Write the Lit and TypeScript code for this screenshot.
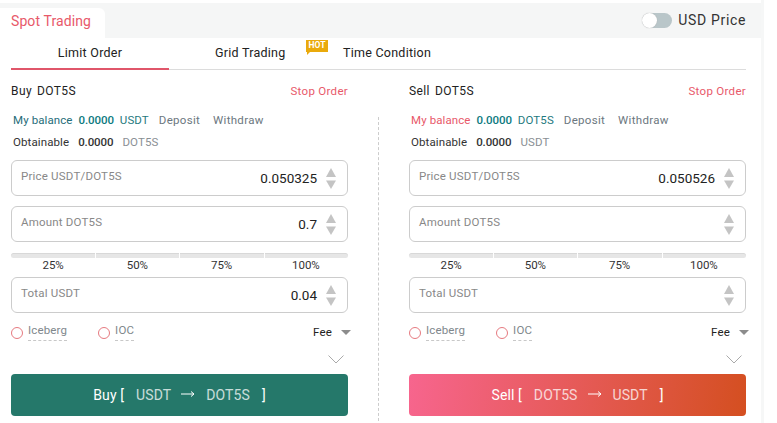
import { LitElement, html, css, svg } from "lit";
import { customElement } from "lit/decorators.js";

interface Side {
  title: string; labelRed: boolean; balUnit: string; obUnit: string;
  price: string; amount: string; total: string; action: string; from: string; to: string; btn: string;
}

const sides: Side[] = [
  { title: "Buy", labelRed: false, balUnit: "USDT", obUnit: "DOT5S", price: "0.050325", amount: "0.7", total: "0.04", action: "Buy", from: "USDT", to: "DOT5S", btn: "buy" },
  { title: "Sell", labelRed: true, balUnit: "DOT5S", obUnit: "USDT", price: "0.050526", amount: "", total: "", action: "Sell", from: "DOT5S", to: "USDT", btn: "sell" },
];

@customElement("app-root")
export class AppRoot extends LitElement {
  static styles = css`
    :host { display: block; width: 777px; height: 423px; overflow: hidden; background: #fff; font-family: Roboto, "Liberation Sans", sans-serif; color: #222; }
    .page { width: 761px; height: 423px; background: #fff; border-right: 3px solid #f6f7f7; padding-top: 3px; box-sizing: content-box; }
    .topbar { height: 35px; background: #f5f6f6; display: flex; justify-content: space-between; align-items: flex-end; }
    .tab { width: 105px; height: 30px; box-sizing: border-box; background: #fff; border-top-right-radius: 6px; color: #e8596a; font-size: 14px; padding: 5px 0 0 11px; letter-spacing: 0.1px; }
    .usd { display: flex; align-items: center; gap: 6px; font-size: 14px; color: #333; height: 35px; margin-right: 15px; letter-spacing: 0.65px; }
    .usd span.txt { margin-bottom: 2px; }
    .toggle { width: 30px; height: 15px; border-radius: 8px; background: #b9c6c9; position: relative; }
    .toggle i { position: absolute; left: 0; top: 0; width: 15px; height: 15px; border-radius: 50%; background: #fff; box-shadow: 0 0 1px #aaa; }
    .tabs { display: flex; margin: 0 15px 0 11px; height: 31px; border-bottom: 1px solid #dcdcdc; font-size: 12.5px; color: #222; letter-spacing: 0.25px; }
    .t { height: 31px; box-sizing: border-box; padding-top: 7px; position: relative; }
    .t.a { width: 158px; text-align: center; border-bottom: 2px solid #e0566a; height: 32px; }
    .t.b { margin-left: 46px; width: 128px; }
    .hot { position: absolute; left: 91px; top: 2px; width: 22px; height: 12px; background: #eaaa0c; color: #fff; font-size: 8.5px; font-weight: 700; line-height: 11px; text-align: center; letter-spacing: 0; }
    .hot::after { content: ""; position: absolute; left: 1px; bottom: -3px; border-left: 3px solid #eaaa0c; border-bottom: 3px solid transparent; }
    .cols { display: flex; padding-left: 11px; }
    .col { width: 337px; flex: none; }
    .div { width: 61px; flex: none; position: relative; }
    .div i { position: absolute; left: 30px; top: 47px; bottom: -10px; border-left: 1px dashed #ccc; }
    .head { display: flex; justify-content: space-between; align-items: flex-start; height: 39px; box-sizing: border-box; padding-top: 14px; line-height: 14px; font-size: 12px; letter-spacing: 0.4px; }
    .head b { font-weight: 400; color: #222; }
    .head b span { margin-left: 5px; }
    .stop { color: #e8596a; font-size: 11.5px; letter-spacing: 0.3px; }
    .line { display: flex; align-items: center; height: 22px; padding-left: 2px; font-size: 11.5px; color: #333; white-space: nowrap; letter-spacing: 0.1px; }
    .line .lbl { color: #266d79; margin-right: 6px; }
    .line .lbl.red { color: #e8596a; }
    .line .lbl.dark { color: #333; margin-right: 9px; }
    .line .num { font-weight: 500; color: #0d7a80; margin-right: 6px; letter-spacing: -0.1px; }
    .line .num.dark { color: #333; margin-right: 9px; }
    .line .unit { color: #1f7a80; letter-spacing: 0.1px; }
    .line .unit.gray { color: #8a8f94; }
    .line .link { color: #6c7780; margin-left: 10px; letter-spacing: 0.3px; }
    .line .link + .link { margin-left: 13px; }
    .lines { margin-bottom: 7px; }
    .box { height: 36px; box-sizing: border-box; border: 1px solid #ccc; border-radius: 6px; display: flex; align-items: center; padding: 0 11px 0 9px; font-size: 11.5px; color: #888; }
    .box + .box { margin-top: 10px; }
    .box .l { flex: 1; letter-spacing: 0.2px; position: relative; top: -2px; }
    .box .v { color: #222; font-size: 13.5px; margin-right: 9px; }
    .box svg { display: block; width: 10px; height: 21px; }
    .slider { display: flex; gap: 1px; margin-top: 11px; height: 5px; }
    .slider i { flex: 1; background: #e6e6e6; border-top: 1px solid #d8d8d8; box-sizing: border-box; }
    .slider i:first-child { border-radius: 3px 0 0 3px; }
    .slider i:last-child { border-radius: 0 3px 3px 0; }
    .pcts { display: flex; height: 14px; font-size: 11.5px; color: #333; margin-bottom: 5px; line-height: 14px; }
    .pcts span { flex: 1; text-align: center; }
    .opts { display: flex; align-items: center; height: 30px; margin-top: 4px; font-size: 11.5px; color: #80878c; }
    .radio { width: 10px; height: 10px; border-radius: 50%; border: 1px solid #e67a80; margin-right: 5px; flex: none; position: relative; top: 1px; }
    .opt { border-bottom: 1px dashed #c8c8c8; padding-bottom: 3px; letter-spacing: 0.15px; }
    .o1, .o2 { display: flex; align-items: center; }
    .o2 { margin-left: 31px; }
    .fee { margin-left: auto; color: #222; display: flex; align-items: center; gap: 9px; position: relative; left: 3px; letter-spacing: 0.2px; }
    .fee i { width: 0; height: 0; border-left: 5px solid transparent; border-right: 5px solid transparent; border-top: 5px solid #8c8c8c; }
    .chev { display: flex; justify-content: flex-end; height: 27px; padding-right: 4px; box-sizing: border-box; padding-top: 8px; }
    .chev svg { width: 16px; height: 9px; display: block; }
    .btn { height: 42px; border-radius: 4px; display: flex; align-items: center; justify-content: center; font-size: 14px; color: #fff; letter-spacing: 0.1px; white-space: pre; }
    .btn.buy { background: #25786a; }
    .btn.sell { background: linear-gradient(100deg, #f7658e 0%, #d44f20 100%); }
    .btn .pair { opacity: 0.75; margin: 0 10px 0 12px; }
    .btn .pair.to { margin: 0 12px 0 11px; }
    .btn svg { width: 14px; height: 8px; display: block; margin: 0 0 2px; }
  `;

  private spin() {
    return svg`<svg viewBox="0 0 10 21" aria-hidden="true"><path d="M5 0l5 9H0z" fill="#c4c4c4"/><path d="M0 12.500h10L5 21z" fill="#c4c4c4"/></svg>`;
  }

  private side(s: Side) {
    return html`
      <div class="col">
        <div class="head"><b>${s.title}<span>DOT5S</span></b><span class="stop">Stop Order</span></div>
        <div class="lines">
          <div class="line">
            <span class="lbl ${s.labelRed ? "red" : ""}">My balance</span>
            <span class="num">0.0000</span><span class="unit">${s.balUnit}</span>
            <span class="link">Deposit</span><span class="link">Withdraw</span>
          </div>
          <div class="line">
            <span class="lbl dark">Obtainable</span>
            <span class="num dark">0.0000</span><span class="unit gray">${s.obUnit}</span>
          </div>
        </div>
        <div class="box"><span class="l">Price USDT/DOT5S</span><span class="v">${s.price}</span>${this.spin()}</div>
        <div class="box"><span class="l">Amount DOT5S</span><span class="v">${s.amount}</span>${this.spin()}</div>
        <div class="slider"><i></i><i></i><i></i><i></i></div>
        <div class="pcts"><span>25%</span><span>50%</span><span>75%</span><span>100%</span></div>
        <div class="box"><span class="l">Total USDT</span><span class="v">${s.total}</span>${this.spin()}</div>
        <div class="opts">
          <span class="o1"><i class="radio"></i><span class="opt">Iceberg</span></span>
          <span class="o2"><i class="radio"></i><span class="opt">IOC</span></span>
          <span class="fee">Fee <i></i></span>
        </div>
        <div class="chev"><svg viewBox="0 0 16 9" aria-hidden="true"><path d="M.5.500L8 8l7.500-7.500" fill="none" stroke="#aaa"/></svg></div>
        <div class="btn ${s.btn}">${s.action} [<span class="pair">${s.from}</span><svg viewBox="0 0 14 8" aria-hidden="true"><path d="M0 4h13M10 1.500L13 4l-3 2.500" fill="none" stroke="#fff"/></svg><span class="pair to">${s.to}</span>]</div>
      </div>`;
  }

  render() {
    return html`
      <div class="page">
        <div class="topbar">
          <div class="tab">Spot Trading</div>
          <div class="usd"><span class="toggle"><i></i></span><span class="txt">USD Price</span></div>
        </div>
        <div class="tabs">
          <div class="t a">Limit Order</div>
          <div class="t b">Grid Trading<span class="hot">HOT</span></div>
          <div class="t">Time Condition</div>
        </div>
        <div class="cols">
          ${this.side(sides[0])}
          <div class="div"><i></i></div>
          ${this.side(sides[1])}
        </div>
      </div>`;
  }
}
